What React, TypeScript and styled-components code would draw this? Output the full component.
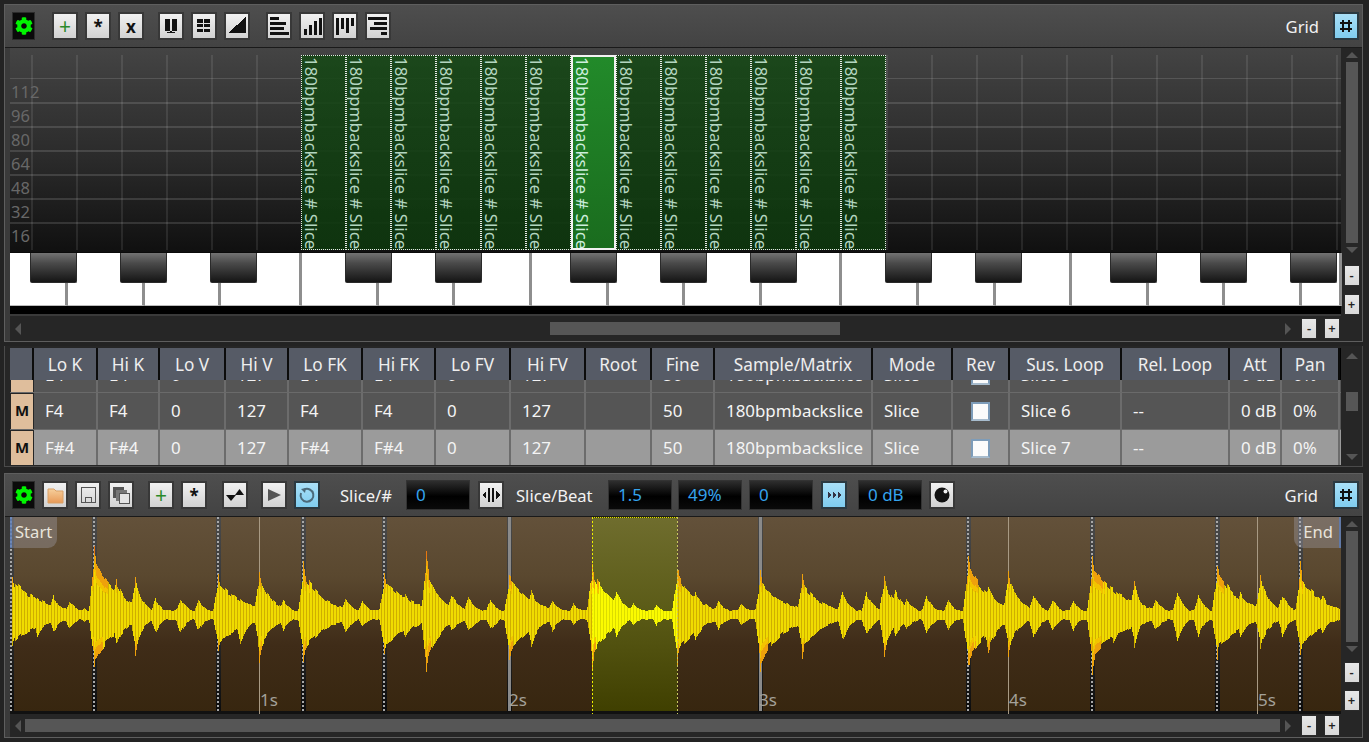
import React from "react";
import styled, { createGlobalStyle } from "styled-components";
import { FaCog } from "react-icons/fa";

const FONT = `"Noto Sans", "Open Sans", "Liberation Sans", sans-serif`;

const Global = createGlobalStyle`
  html, body { margin: 0; padding: 0; background: #232323; overflow: hidden; }
  * { box-sizing: border-box; }
`;

const Page = styled.div`
  width: 1369px;
  height: 742px;
  padding: 4px 6px 0 4px;
  display: flex;
  flex-direction: column;
  background: #232323;
  font-family: ${FONT};
  overflow: hidden;
`;

const Panel = styled.section<{ $h: number; $mt?: number }>`
  height: ${(p) => p.$h}px;
  flex: none;
  margin-top: ${(p) => p.$mt ?? 0}px;
  display: flex;
  flex-direction: column;
  border: 1px solid #5e5e5e;
  background: #3a3a3a;
`;

const Toolbar = styled.div`
  height: 43px;
  flex: none;
  display: flex;
  align-items: center;
  padding: 0 3px 0 7px;
  background: linear-gradient(#4e4e4e, #434343);
  border-bottom: 1px solid #1a1a1a;
`;

const GearBox = styled.div`
  width: 23px;
  height: 28px;
  background: #0a0a0a;
  border: 1px solid #2c2c2c;
  display: flex;
  align-items: center;
  justify-content: center;
  color: #00f500;
  font-size: 18px;
`;

const Btn = styled.button<{ $on?: boolean; $ml?: number }>`
  width: 26px;
  height: 28px;
  flex: none;
  padding: 0;
  margin: 0 0 0 ${(p) => p.$ml ?? 7}px;
  border: 2px solid ${(p) => (p.$on ? "#2b3a42" : "#383838")};
  background: ${(p) =>
    p.$on ? "linear-gradient(#a9e0f8, #7fcdf0)" : "linear-gradient(#f1f1f1, #d2d2d2)"};
  color: #111;
  font-family: ${FONT};
  font-size: 17px;
  font-weight: 700;
  line-height: 1;
  display: flex;
  align-items: center;
  justify-content: center;
  svg { display: block; }
`;

const PlusGlyph = styled.span`
  color: #2a8a2a;
  font-size: 21px;
  font-weight: 400;
  line-height: 1;
`;

const ToolLabel = styled.span<{ $ml?: number; $w?: number; $mr?: number }>`
  color: #f2f2f2;
  font-size: 16.6px;
  flex: none;
  margin-left: ${(p) => p.$ml ?? 0}px;
  margin-right: ${(p) => p.$mr ?? 0}px;
  ${(p) => (p.$w ? `width: ${p.$w}px;` : "")}
  white-space: nowrap;
`;

const Spacer = styled.div`
  flex: 1;
`;

const ValueBox = styled.div<{ $ml?: number }>`
  width: 64px;
  height: 30px;
  flex: none;
  margin-left: ${(p) => p.$ml ?? 0}px;
  padding-left: 9px;
  background: linear-gradient(#2e2e2e, #000 55%, #0a0a0a);
  border: 1px solid #333;
  color: #35a4ee;
  font-size: 17px;
  line-height: 27px;
`;

const Body = styled.div`
  flex: 1;
  min-height: 0;
  display: flex;
  padding-left: 5px;
`;

const CanvasCol = styled.div`
  width: 1331px;
  flex: none;
  display: flex;
  flex-direction: column;
`;

const SideCol = styled.div`
  flex: 1;
  background: #262626;
  display: flex;
  flex-direction: column;
  align-items: center;
  padding-top: 4px;
`;

const Arrow = styled.i<{ $dir: "up" | "down" | "left" | "right" }>`
  display: block;
  flex: none;
  width: 0;
  height: 0;
  border-style: solid;
  border-color: transparent;
  ${(p) =>
    p.$dir === "up"
      ? "border-width: 0 6px 6px 6px; border-bottom-color: #555;"
      : p.$dir === "down"
      ? "border-width: 6px 6px 0 6px; border-top-color: #555;"
      : p.$dir === "left"
      ? "border-width: 6px 6px 6px 0; border-right-color: #555;"
      : "border-width: 6px 0 6px 6px; border-left-color: #555;"}
`;

const VThumb = styled.div<{ $h: number }>`
  width: 12px;
  height: ${(p) => p.$h}px;
  margin: 4px 0 4px;
  background: #565656;
  flex: none;
`;

const MiniBtn = styled.button<{ $mt?: number; $ml?: number }>`
  width: 16px;
  height: 21px;
  flex: none;
  padding: 0;
  margin: ${(p) => p.$mt ?? 0}px 0 0 ${(p) => p.$ml ?? 0}px;
  border: 1px solid #2a2a2a;
  background: linear-gradient(#e8e8e8, #d8d8d8);
  color: #222;
  font-family: ${FONT};
  font-size: 13px;
  line-height: 1;
  font-weight: 600;
`;

const HScroll = styled.div<{ $h: number }>`
  height: ${(p) => p.$h}px;
  flex: none;
  margin: 0 0 0 5px;
  padding: 0 7px 0 5px;
  background: #262626;
  display: flex;
  align-items: center;
`;

const HTrack = styled.div`
  width: 1276px;
  flex: none;
  display: flex;
  align-items: center;
`;

const HThumb = styled.div<{ $ml: number; $w: number }>`
  height: 13px;
  width: ${(p) => p.$w}px;
  margin-left: ${(p) => p.$ml}px;
  background: #565656;
  flex: none;
`;

const HEnd = styled.div`
  margin-left: auto;
`;

/* --- Key editor --- */
const Grid = styled.div`
  height: 205px;
  flex: none;
  position: relative;
  overflow: hidden;
  background: linear-gradient(#444 0%, #3a3a3a 20%, #2a2a2a 55%, #101010 100%);
  border-bottom: 1px solid #0a0a0a;
`;

const GridLines = styled.svg`
  position: absolute;
  inset: 0;
`;

const VelLabels = styled.div`
  position: absolute;
  left: 1px;
  top: 32px;
  display: flex;
  flex-direction: column;
  color: #686868;
  font-size: 16.5px;
  line-height: 24px;
`;

const Notes = styled.div`
  position: absolute;
  left: 291px;
  top: 7px;
  display: flex;
`;

const Note = styled.div<{ $on?: boolean }>`
  width: 45px;
  height: 195px;
  overflow: hidden;
  background: ${(p) =>
    p.$on
      ? "linear-gradient(#228a2a, #1a6c1e)"
      : "linear-gradient(rgba(22, 72, 22, 0.88), rgba(14, 54, 14, 0.92))"};
  border: ${(p) => (p.$on ? "2px solid #f2f2f2" : "1px dotted #e8e8e8")};
  color: ${(p) => (p.$on ? "#cdeedd" : "#b4d6c0")};
  writing-mode: vertical-rl;
  white-space: nowrap;
  font-size: 16.9px;
  line-height: 20px;
  padding: ${(p) => (p.$on ? "0 22px 0 0" : "1px 24px 0 0")};
`;

const Keyboard = styled.div`
  height: 61px;
  flex: none;
  position: relative;
  background: #000;
`;

const WhiteRow = styled.div`
  height: 53px;
  display: flex;
  background: #fff;
`;

const WhiteKey = styled.div<{ $w: number }>`
  width: ${(p) => p.$w}px;
  flex: none;
  background: #fff;
  border-right: 3px solid #8e8e8e;
  border-bottom: 1px solid #bbb;
`;

const BlackKey = styled.div<{ $x: number }>`
  position: absolute;
  top: 0;
  left: ${(p) => p.$x}px;
  width: 47px;
  height: 30px;
  background: linear-gradient(#737373, #4a4a4a 35%, #151515);
  border: 1px solid #2a2a2a;
  border-top: none;
  border-radius: 0 0 2px 2px;
`;

/* --- Table --- */
const TablePanel = styled.section`
  height: 121px;
  flex: none;
  margin-top: 4px;
  display: flex;
  padding: 2px 0 1px 5px;
  background: #262626;
  border: 1px solid #4a4a4a;
  border-width: 0 1px 1px 1px;
`;

const Table = styled.div`
  width: 1331px;
  flex: none;
  display: flex;
  flex-direction: column;
`;

const COLS = "24px 64px 62px 66px 63px 74px 73px 75px 75px 66px 63px 158px 80px 57px 112px 108px 52px 58px";

const HeaderRow = styled.div`
  height: 32px;
  flex: none;
  display: grid;
  grid-template-columns: ${COLS};
  background: #000;
`;

const HeadCell = styled.div`
  background: #565b66;
  border-right: 2px solid #0c0c0c;
  border-bottom: 1px solid #2b2b2b;
  color: #eee;
  font-size: 17.2px;
  line-height: 32px;
  text-align: center;
  white-space: nowrap;
  padding-top: 1px;
`;

const Rows = styled.div`
  flex: 1;
  min-height: 0;
  overflow: hidden;
  display: flex;
  flex-direction: column;
  justify-content: flex-end;
`;

const Row = styled.div<{ $sel?: boolean }>`
  height: 36.5px;
  flex: none;
  display: grid;
  grid-template-columns: ${COLS};
  background: ${(p) => (p.$sel ? "#9b9b9b" : "#555")};
  border-top: 1px solid #6a6a6a;
`;

const Cell = styled.div`
  border-right: 2px solid #6c6c6c;
  color: #f4f4f4;
  font-size: 16.9px;
  line-height: 36px;
  padding-left: 11px;
  white-space: nowrap;
  overflow: hidden;
`;

const MCell = styled.div`
  background: #262626;
  padding: 1px 1px 0 1px;
`;

const MuteBtn = styled.div`
  height: 100%;
  background: #dfbe9c;
  color: #111;
  font-size: 15px;
  font-weight: 700;
  text-align: center;
  line-height: 33px;
`;

const Check = styled.div`
  width: 19px;
  height: 19px;
  margin: 9px 0 0 9px;
  background: #fbfbfb;
  border: 2px solid #7d9cb9;
  border-bottom-color: #a8bccd;
`;

const CheckCell = styled(Cell)`
  padding-left: 9px;
`;

const RightTrack = styled.div`
  flex: 1;
  display: flex;
  flex-direction: column;
  align-items: center;
  padding-top: 5px;
`;

const TableThumb = styled.div`
  width: 12px;
  height: 19px;
  margin: 33px 0 43px;
  background: #565656;
`;

/* --- Sample editor --- */
const Wave = styled.div`
  height: 197px;
  flex: none;
  position: relative;
  overflow: hidden;
  background: linear-gradient(#63513a, #5a482f 30%, #3f2c18 65%, #37260f 100%);
`;

const WaveSvg = styled.svg`
  position: absolute;
  inset: 0;
`;

const SelectedSlice = styled.div`
  position: absolute;
  left: 582px;
  top: 0;
  width: 85px;
  height: 197px;
  background: linear-gradient(#6f6d2e, #5c5c18 45%, #3f3f00);
  border-top: 1px dotted #e4e400;
  border-bottom: 1px dotted #e4e400;
`;

const TimeLabel = styled.span<{ $x: number }>`
  position: absolute;
  left: ${(p) => p.$x}px;
  top: 172px;
  color: #a4a19a;
  font-size: 17px;
  line-height: 22px;
`;

const Marker = styled.div<{ $end?: boolean }>`
  position: absolute;
  top: 0;
  ${(p) => (p.$end ? "right: 0;" : "left: 0;")}
  width: 47px;
  height: 31px;
  padding: ${(p) => (p.$end ? "4px 6px 0 0" : "4px 0 0 3px")};
  text-align: ${(p) => (p.$end ? "right" : "left")};
  color: #e8e4dc;
  font-size: 16.6px;
  line-height: 22px;
  background: rgba(170, 170, 185, 0.33);
  border-radius: ${(p) => (p.$end ? "0 0 0 9px" : "0 0 9px 0")};
  ${(p) => (p.$end ? "border-right" : "border-left")}: 2px solid rgba(90, 125, 190, 0.75);
`;

/* --- waveform data --- */
type B = [number, number, number, number];
const BURSTS: B[] = [
  [12, 47, 38, 20], [37, 18, 20, 8], [53, 19, 17, 7], [69, 14, 14, 7], [84, 7, 7, 5],
  [94, 78, 62, 15], [116, 34, 30, 9], [135, 42, 42, 6], [155, 16, 18, 6], [180, 16, 18, 7], [198, 14, 15, 7],
  [218, 44, 40, 18], [240, 16, 28, 8], [259, 53, 49, 9], [283, 15, 15, 7],
  [303, 57, 50, 14], [322, 17, 16, 8], [345, 16, 18, 7], [362, 13, 13, 7],
  [384, 47, 45, 18], [405, 22, 25, 8], [426, 65, 69, 9], [451, 20, 16, 9], [468, 17, 17, 8], [490, 15, 15, 7],
  [509, 47, 50, 16], [531, 24, 30, 8], [552, 14, 16, 7], [573, 11, 10, 7],
  [592, 60, 58, 12], [616, 25, 23, 7], [633, 11, 11, 7], [656, 10, 10, 7],
  [677, 54, 53, 13], [695, 22, 25, 9], [718, 13, 14, 8], [741, 11, 11, 7],
  [760, 46, 62, 16], [802, 43, 46, 13], [842, 22, 25, 7], [866, 22, 20, 7], [884, 47, 45, 7], [895, 24, 20, 8], [906, 15, 15, 8], [926, 18, 18, 7], [948, 15, 15, 6],
  [968, 68, 62, 14], [988, 30, 35, 9], [1008, 50, 42, 8], [1033, 20, 22, 7], [1052, 15, 15, 7], [1073, 15, 15, 6],
  [1092, 68, 60, 19], [1113, 25, 30, 9], [1134, 40, 37, 5], [1155, 15, 15, 8], [1177, 23, 25, 6], [1198, 20, 20, 6],
  [1217, 57, 47, 16], [1240, 22, 22, 9], [1260, 48, 40, 7], [1282, 20, 20, 7],
  [1300, 56, 45, 13], [1322, 20, 18, 6],
];

const SEPS = [1, 84, 208, 293, 374, 499, 750, 958, 1082, 1207, 1290];
const TIMES = [249, 998, 1247];

function buildWave() {
  let seed = 12345;
  const rnd = () => {
    seed = (seed * 1664525 + 1013904223) >>> 0;
    return seed / 4294967296;
  };
  const paths: Record<string, string> = { y: "", d: "", a: "", o: "", r: "", by: "", bd: "" };
  const cy = 98;
  let ju = 1;
  let jd = 1;
  for (let x = 12; x < 1340; x++) {
    if (x % 3 === 0) {
      ju = 0.8 + rnd() * 0.2;
      jd = 0.8 + rnd() * 0.2;
    }
    let up = 5;
    let dn = 5;
    for (const [x0, a, b, dec] of BURSTS) {
      const t = x - x0;
      if (t < -5 || t > dec * 8) continue;
      const big = a >= 40;
      const att = t < 0 ? (t + 6) / 6 : 1;
      const bodyScale = big ? 0.8 : 1.1;
      const body = att * bodyScale * Math.exp(-Math.max(0, t) / (dec * (big ? 1.6 : 1.3)));
      const spike = big && t >= 0 ? Math.exp(-t / 6) : 0;
      const e = Math.max(body, spike);
      up = Math.max(up, a * e);
      dn = Math.max(dn, b * e);
    }
    const u = Math.max(3, up * ju);
    const l = Math.max(3, dn * jd);
    const inSel = x >= 592 && x < 677;
    const base = x % 3 === 0 ? (inSel ? "bd" : "d") : inSel ? "by" : "y";
    const X = x - 10;
    const seg = (amp: number, s: number) => {
      const p = (from: number, to: number) => `M${X} ${cy + s * from}V${cy + s * to}`;
      if (amp < 34) {
        paths[base] += p(0, amp);
        return;
      }
      paths[base] += p(0, amp * 0.62);
      paths.a += p(amp * 0.62, amp * 0.76);
      if (amp > 60) {
        paths.o += p(amp * 0.76, amp * 0.88);
        paths.r += p(amp * 0.88, amp);
      } else {
        paths.o += p(amp * 0.76, amp);
      }
    };
    seg(u, -1);
    seg(l, 1);
  }
  return paths;
}
const WP = buildWave();

const WaveDrawing = () => (
  <WaveSvg width={1331} height={197} shapeRendering="crispEdges">
    <defs>
      <linearGradient id="sepFill" x1="0" y1="0" x2="0" y2="1">
        <stop offset="0" stopColor="#4a4a4a" />
        <stop offset="0.45" stopColor="#333" />
        <stop offset="1" stopColor="#0c0c0c" />
      </linearGradient>
    </defs>
    {SEPS.map((x) => (
      <rect key={x} x={x - 2} y={0} width={5} height={197} fill="url(#sepFill)" />
    ))}
    {[499, 750].map((x) => (
      <rect key={x} x={x - 1} y={0} width={3} height={197} fill="#8a8a8a" />
    ))}
    {SEPS.filter((x) => x !== 499 && x !== 750).map((x) => (
      <line key={x} x1={x} x2={x} y1={0} y2={197} stroke="#a8a8a8" strokeWidth={2} strokeDasharray="2 2" />
    ))}
    <rect x={0} y={194} width={1331} height={3} fill="#111" />
    {TIMES.map((x) => (
      <rect key={x} x={x} y={0} width={1} height={197} fill="#a89a84" />
    ))}
    <g fill="none" strokeWidth={1} transform="translate(0.5 0)">
      <path d={WP.d} stroke="#cfae00" />
      <path d={WP.y} stroke="#f0dc00" />
      <path d={WP.bd} stroke="#dcdc00" />
      <path d={WP.by} stroke="#fbfb00" />
      <path d={WP.a} stroke="#f2c400" />
      <path d={WP.o} stroke="#eea10c" />
      <path d={WP.r} stroke="#e8770f" />
    </g>
    <line x1={582.5} x2={582.5} y1={0} y2={197} stroke="#f0f000" strokeDasharray="2 2" />
    <line x1={667.5} x2={667.5} y1={0} y2={197} stroke="#c8c860" strokeDasharray="2 2" />
  </WaveSvg>
);

/* --- icons --- */
const Ico = ({ children }: { children: React.ReactNode }) => (
  <svg width={22} height={24} viewBox="0 0 22 24" shapeRendering="crispEdges">
    {children}
  </svg>
);

const Bars = ({ r }: { r: [number, number, number, number][] }) => (
  <Ico>
    {r.map(([x, y, w, h], i) => (
      <rect key={i} x={x} y={y} width={w} height={h} fill="#111" />
    ))}
  </Ico>
);

const NOTE_TEXT = "180bpmbackslice # Slice";
const KEY_EDGES = [10, 67, 144, 220, 301, 378, 454, 531, 608, 684, 761, 841, 918, 995, 1071, 1148, 1224, 1301, 1341];
const BLACKS = [20, 110, 200, 335, 425, 560, 650, 740, 875, 965, 1100, 1190, 1280];
const VERTS = Array.from({ length: 30 }, (_, i) => 21 + i * 45);
const HORZ = [30, 54, 78, 102, 126, 150, 174];

const HEADS = ["", "Lo K", "Hi K", "Lo V", "Hi V", "Lo FK", "Hi FK", "Lo FV", "Hi FV", "Root", "Fine", "Sample/Matrix", "Mode", "Rev", "Sus. Loop", "Rel. Loop", "Att", "Pan"];

const RowCells = ({ k, slice, sel }: { k: string; slice: string; sel?: boolean }) => (
  <Row $sel={sel}>
    <MCell>
      <MuteBtn>M</MuteBtn>
    </MCell>
    <Cell>{k}</Cell>
    <Cell>{k}</Cell>
    <Cell>0</Cell>
    <Cell>127</Cell>
    <Cell>{k}</Cell>
    <Cell>{k}</Cell>
    <Cell>0</Cell>
    <Cell>127</Cell>
    <Cell />
    <Cell>50</Cell>
    <Cell>180bpmbackslice</Cell>
    <Cell>Slice</Cell>
    <CheckCell>
      <Check />
    </CheckCell>
    <Cell>{slice}</Cell>
    <Cell>--</Cell>
    <Cell>0 dB</Cell>
    <Cell>0%</Cell>
  </Row>
);

const HashIcon = () => (
  <svg width={14} height={14} viewBox="0 0 14 14" shapeRendering="crispEdges" fill="#111">
    <rect x={3} y={1} width={2} height={12} />
    <rect x={9} y={1} width={2} height={12} />
    <rect x={1} y={3} width={12} height={2} />
    <rect x={1} y={9} width={12} height={2} />
  </svg>
);

export default function App() {
  return (
    <Page>
      <Global />
      <Panel $h={338}>
        <Toolbar>
          <GearBox><FaCog /></GearBox>
          <Btn $ml={17}><PlusGlyph>+</PlusGlyph></Btn>
          <Btn>*</Btn>
          <Btn>x</Btn>
          <Btn $ml={14}>
            <Bars r={[[5, 5, 5, 12], [12, 5, 5, 12], [7, 18, 8, 1], [10, 17, 2, 1]]} />
          </Btn>
          <Btn>
            <Bars r={[[4, 5, 6, 4], [11, 5, 6, 4], [4, 10, 6, 3], [11, 10, 6, 3], [4, 15, 6, 3], [11, 15, 6, 3]]} />
          </Btn>
          <Btn>
            <Ico><polygon points="2,19 20,19 20,3" fill="#111" /></Ico>
          </Btn>
          <Btn $ml={16}>
            <Bars r={[[2, 3, 9, 3], [2, 8, 16, 3], [2, 13, 14, 3], [2, 18, 19, 3]]} />
          </Btn>
          <Btn>
            <Bars r={[[3, 15, 3, 6], [8, 11, 3, 10], [13, 7, 3, 14], [18, 4, 3, 17]]} />
          </Btn>
          <Btn>
            <Bars r={[[2, 4, 3, 17], [7, 4, 3, 11], [12, 4, 3, 15], [17, 4, 3, 8]]} />
          </Btn>
          <Btn>
            <Bars r={[[1, 3, 19, 3], [7, 8, 13, 3], [3, 13, 17, 3], [14, 18, 6, 3]]} />
          </Btn>
          <Spacer />
          <ToolLabel $mr={14}>Grid</ToolLabel>
          <Btn $on $ml={0}><HashIcon /></Btn>
        </Toolbar>
        <Body>
          <CanvasCol>
            <Grid>
              <GridLines width={1331} height={205} shapeRendering="crispEdges">
                {VERTS.map((x) => (
                  <rect key={x} x={x} y={7} width={2} height={195} fill="rgba(255,255,255,0.09)" />
                ))}
                {HORZ.map((y, i) => (
                  <rect key={y} x={0} y={y} width={1331} height={i === 0 ? 1 : 2} fill="rgba(255,255,255,0.13)" />
                ))}
              </GridLines>
              <VelLabels>
                {[112, 96, 80, 64, 48, 32, 16].map((v) => (
                  <span key={v}>{v}</span>
                ))}
              </VelLabels>
              <Notes>
                {Array.from({ length: 13 }, (_, i) => (
                  <Note key={i} $on={i === 6}>{NOTE_TEXT}</Note>
                ))}
              </Notes>
            </Grid>
            <Keyboard>
              <WhiteRow>
                {KEY_EDGES.slice(1).map((e, i) => (
                  <WhiteKey key={e} $w={e - KEY_EDGES[i] + (i === 0 ? 1 : 0)} />
                ))}
              </WhiteRow>
              {BLACKS.map((x) => (
                <BlackKey key={x} $x={x} />
              ))}
            </Keyboard>
          </CanvasCol>
          <SideCol>
            <Arrow $dir="up" />
            <VThumb $h={181} />
            <Arrow $dir="down" />
            <MiniBtn $mt={12}>-</MiniBtn>
            <MiniBtn $mt={8}>+</MiniBtn>
          </SideCol>
        </Body>
        <HScroll $h={25}>
          <HTrack>
            <Arrow $dir="left" />
            <HThumb $ml={529} $w={290} />
            <HEnd><Arrow $dir="right" /></HEnd>
          </HTrack>
          <MiniBtn $ml={10}>-</MiniBtn>
          <MiniBtn $ml={7}>+</MiniBtn>
        </HScroll>
      </Panel>

      <TablePanel>
        <Table>
          <HeaderRow>
            {HEADS.map((h, i) => (
              <HeadCell key={i}>{h}</HeadCell>
            ))}
          </HeaderRow>
          <Rows>
            <RowCells k="E4" slice="Slice 5" />
            <RowCells k="F4" slice="Slice 6" />
            <RowCells k="F#4" slice="Slice 7" sel />
          </Rows>
        </Table>
        <RightTrack>
          <Arrow $dir="up" />
          <TableThumb />
          <Arrow $dir="down" />
        </RightTrack>
      </TablePanel>

      <Panel $h={265} $mt={6}>
        <Toolbar>
          <GearBox><FaCog /></GearBox>
          <Btn $ml={7}>
            <Ico>
              <defs>
                <linearGradient id="folderFill" x1="0" y1="0" x2="0" y2="1">
                  <stop offset="0" stopColor="#f6cf9c" />
                  <stop offset="1" stopColor="#e89a58" />
                </linearGradient>
              </defs>
              <path d="M4 6h6l2 2h7v12H4z" fill="url(#folderFill)" stroke="#d9a066" shapeRendering="auto" />
            </Ico>
          </Btn>
          <Btn>
            <Ico>
              <path d="M4.5 4.5h14v15h-14z M8.5 19.5v-5h6v5" fill="none" stroke="#555" strokeWidth={1.4} />
            </Ico>
          </Btn>
          <Btn>
            <Ico>
              <rect x={3} y={4} width={11} height={11} fill="#555" />
              <rect x={6} y={7} width={11} height={11} fill="#777" />
              <rect x={9} y={10} width={10} height={10} fill="#e4e4e4" stroke="#555" />
            </Ico>
          </Btn>
          <Btn $ml={14}><PlusGlyph>+</PlusGlyph></Btn>
          <Btn>*</Btn>
          <Btn $ml={15}>
            <svg width={22} height={24} viewBox="0 0 22 24">
              <polygon points="2,12 12,12 7,18" fill="#111" />
              <polygon points="11,12 20,12 15.5,6" fill="#111" />
            </svg>
          </Btn>
          <Btn $ml={13}>
            <Ico><polygon points="5,6 18,12 5,18" fill="#555" shapeRendering="auto" /></Ico>
          </Btn>
          <Btn $on>
            <svg width={18} height={18} viewBox="0 0 18 18">
              <path d="M6 3.6A6.4 6.4 0 1 1 3 7" fill="none" stroke="#4b6a7a" strokeWidth={2} />
              <polygon points="3,3 8,2 7,7" fill="#4b6a7a" />
            </svg>
          </Btn>
          <ToolLabel $ml={20} $w={66}>Slice/#</ToolLabel>
          <ValueBox>0</ValueBox>
          <Btn $ml={8}>
            <Ico>
              <rect x={8} y={5} width={2} height={14} fill="#111" />
              <rect x={12} y={5} width={2} height={14} fill="#111" />
              <polygon points="6,8 6,16 2,12" fill="#111" />
              <polygon points="16,8 16,16 20,12" fill="#111" />
            </Ico>
          </Btn>
          <ToolLabel $ml={12} $w={92}>Slice/Beat</ToolLabel>
          <ValueBox>1.5</ValueBox>
          <ValueBox $ml={6}>49%</ValueBox>
          <ValueBox $ml={7}>0</ValueBox>
          <Btn $on $ml={8}>
            <Ico>
              <polygon points="5,8 8,12 5,16" fill="#334" />
              <polygon points="10,8 13,12 10,16" fill="#334" />
              <polygon points="15,8 18,12 15,16" fill="#334" />
            </Ico>
          </Btn>
          <ValueBox $ml={11}>0 dB</ValueBox>
          <Btn $ml={7}>
            <svg width={18} height={18} viewBox="0 0 18 18">
              <circle cx={9} cy={9} r={7.5} fill="#111" />
              <circle cx={12.5} cy={5.5} r={2} fill="#f0f0f0" />
            </svg>
          </Btn>
          <Spacer />
          <ToolLabel $mr={15}>Grid</ToolLabel>
          <Btn $on $ml={0}><HashIcon /></Btn>
        </Toolbar>
        <Body>
          <CanvasCol>
            <Wave>
              <SelectedSlice />
              <WaveDrawing />
              <Marker>Start</Marker>
              <Marker $end>End</Marker>
              <TimeLabel $x={250}>1s</TimeLabel>
              <TimeLabel $x={499}>2s</TimeLabel>
              <TimeLabel $x={749}>3s</TimeLabel>
              <TimeLabel $x={999}>4s</TimeLabel>
              <TimeLabel $x={1248}>5s</TimeLabel>
            </Wave>
          </CanvasCol>
          <SideCol>
            <Arrow $dir="up" />
            <VThumb $h={111} />
            <Arrow $dir="down" />
            <MiniBtn $mt={10}>-</MiniBtn>
            <MiniBtn $mt={7}>+</MiniBtn>
          </SideCol>
        </Body>
        <HScroll $h={23}>
          <HTrack>
            <Arrow $dir="left" />
            <HThumb $ml={4} $w={1255} />
            <HEnd><Arrow $dir="right" /></HEnd>
          </HTrack>
          <MiniBtn $ml={10}>-</MiniBtn>
          <MiniBtn $ml={7}>+</MiniBtn>
        </HScroll>
      </Panel>
    </Page>
  );
}
